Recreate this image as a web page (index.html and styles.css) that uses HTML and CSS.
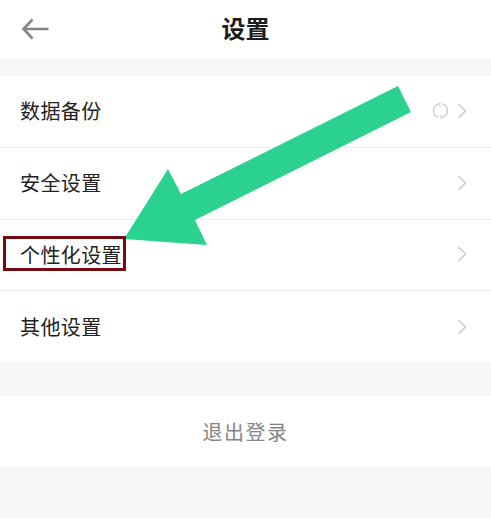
FILE: index.html
```html
<!DOCTYPE html>
<html lang="zh-CN">
<head>
    <meta charset="UTF-8">
    <meta name="viewport" content="width=device-width, initial-scale=1.0">
    <title>设置</title>
    <link rel="stylesheet" href="styles.css">
</head>
<body>
    <div class="page">
        <div class="header">
            <svg class="back" width="30" height="24" viewBox="0 0 30 24">
                <path d="M28.500 12H3.500M12.500 2.500L3.500 12l9 9.500" fill="none" stroke="#858585" stroke-width="2.600"/>
            </svg>
            <h1>设置</h1>
        </div>

        <div class="group">
            <div class="row">
                <span>数据备份</span>
                <div class="row-icons">
                    <svg width="17" height="17" viewBox="0 0 17 17">
                        <path d="M6.500 1.800A7 7 0 0 0 6.500 15.200M10.500 1.800A7 7 0 0 1 10.500 15.200" fill="none" stroke="#cfcfcf" stroke-width="1.400"/>
                        <path d="M6.500 1.800L9 .5M6.500 1.800L8.500 4M10.500 15.200L8 16.500M10.500 15.200L8.500 13" fill="none" stroke="#cfcfcf" stroke-width="1.200"/>
                    </svg>
                    <svg class="chevron" width="10" height="16" viewBox="0 0 10 16">
                        <path d="M1.500 1l7 7-7 7" fill="none" stroke="#c8c8c8" stroke-width="1.400"/>
                    </svg>
                </div>
            </div>
            <div class="row">
                <span>安全设置</span>
                <div class="row-icons">
                    <svg class="chevron" width="10" height="16" viewBox="0 0 10 16">
                        <path d="M1.500 1l7 7-7 7" fill="none" stroke="#c8c8c8" stroke-width="1.400"/>
                    </svg>
                </div>
            </div>
            <div class="row row-short">
                <span>个性化设置</span>
                <div class="row-icons">
                    <svg class="chevron" width="10" height="16" viewBox="0 0 10 16">
                        <path d="M1.500 1l7 7-7 7" fill="none" stroke="#c8c8c8" stroke-width="1.400"/>
                    </svg>
                </div>
            </div>
            <div class="row">
                <span>其他设置</span>
                <div class="row-icons">
                    <svg class="chevron" width="10" height="16" viewBox="0 0 10 16">
                        <path d="M1.500 1l7 7-7 7" fill="none" stroke="#c8c8c8" stroke-width="1.400"/>
                    </svg>
                </div>
            </div>
        </div>

        <div class="logout">退出登录</div>

        <!-- annotation on top of the screenshot -->
        <svg class="arrow" width="491" height="518" viewBox="0 0 491 518">
            <polygon points="398,86 411,112 195,220 207,245 124,239 168,169 181,194" fill="#2bd28f"/>
        </svg>
        <div class="marker"></div>
    </div>
</body>
</html>
```

FILE: styles.css
```css
body {
    margin: 0;
    font-family: "Noto Sans CJK SC", "Liberation Sans", sans-serif;
    background-color: #f7f7f7;
}
.page {
    position: relative;
    width: 491px;
    height: 518px;
    overflow: hidden;
}
.header {
    height: 55px;
    padding-bottom: 4px;
    background-color: white;
    display: flex;
    align-items: center;
    justify-content: center;
    position: relative;
}
.header h1 {
    margin: 0;
    font-size: 24px;
    font-weight: 700;
    color: #1c1c1c;
}
.back {
    position: absolute;
    left: 20px;
    top: 17px;
}
.group {
    margin-top: 17px;
    background-color: white;
}
.row {
    height: 69px;
    padding: 0 24px 2px 20px;
    display: flex;
    align-items: center;
    justify-content: space-between;
    border-bottom: 1px solid #eeeeee;
    font-size: 20px;
    letter-spacing: 0.400px;
    color: #222222;
}
.row-short {
    height: 68px;
}
.row:last-child {
    height: 71px;
    padding-bottom: 0;
    border-bottom: none;
}
.row-icons {
    display: flex;
    align-items: center;
    gap: 8px;
}
.chevron {
    display: block;
}
.logout {
    margin-top: 34px;
    height: 71px;
    background-color: white;
    display: flex;
    align-items: center;
    justify-content: center;
    font-size: 20px;
    letter-spacing: 1.500px;
    color: #858585;
}
.arrow {
    position: absolute;
    left: 0;
    top: 0;
}
.marker {
    position: absolute;
    left: 3px;
    top: 236px;
    width: 117px;
    height: 29px;
    border: 3px solid #750a10;
}
```
